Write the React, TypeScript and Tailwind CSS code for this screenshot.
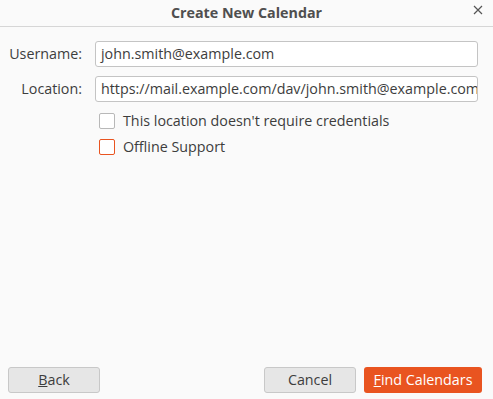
import React from "react";

export default function App() {
  const font = { fontFamily: '"Open Sans", "Noto Sans", sans-serif' };
  return (
    <div className="w-[493px] h-[399px] bg-[#fafafa] flex flex-col text-[#3d3d3d] text-[14.3px]" style={font}>
      <div className="h-[27px] border-b border-[#d6d6d6] flex items-center justify-center relative shrink-0">
        <span className="font-bold text-[#4f4f4f] text-[14.3px]">Create New Calendar</span>
        <svg className="absolute right-[10px] top-[5px]" width="10" height="10" viewBox="0 0 10 10">
          <path d="M1 1 L9 9 M9 1 L1 9" stroke="#555" strokeWidth="1.2" fill="none" />
        </svg>
      </div>
      <div className="flex-1 flex flex-col pt-[14px]">
        <div className="flex items-center h-[26px]">
          <div className="w-[82px] text-right pr-0">Username:</div>
          <div className="ml-[13px] w-[383px] h-[26px] border border-[#c4c4c4] rounded-[3px] bg-white flex items-center px-[5px] overflow-hidden whitespace-nowrap">john.smith@example.com</div>
        </div>
        <div className="flex items-center h-[26px] mt-[9px]">
          <div className="w-[82px] text-right">Location:</div>
          <div className="ml-[13px] w-[383px] h-[26px] border border-[#c4c4c4] rounded-[3px] bg-white flex items-center pl-[5px] overflow-hidden whitespace-nowrap">https://mail.example.com/dav/john.smith@example.com</div>
        </div>
        <div className="flex items-center mt-[8px] ml-[99px]">
          <div className="w-[16px] h-[16px] border border-[#b8b8b8] rounded-[2px] bg-white shrink-0" />
          <span className="ml-[8px]">This location doesn't require credentials</span>
        </div>
        <div className="flex items-center mt-[5px] ml-[99px]">
          <div className="w-[16px] h-[16px] border border-[#e95420] rounded-[2px] bg-white shrink-0" />
          <span className="ml-[8px]">Offline Support</span>
        </div>
      </div>
      <div className="flex items-center h-[26px] mb-[6px] px-[8px]">
        <button className="w-[92px] h-[26px] border border-[#c8c8c8] rounded-[3px] bg-[#e6e6e6] text-[#3d3d3d]"><span className="underline">B</span>ack</button>
        <div className="flex-1" />
        <button className="w-[92px] h-[26px] border border-[#c8c8c8] rounded-[3px] bg-[#e6e6e6] text-[#3d3d3d]">Cancel</button>
        <button className="ml-[8px] w-[118px] h-[26px] rounded-[3px] bg-[#e95420] text-white mr-[3px]"><span className="underline">F</span>ind Calendars</button>
      </div>
    </div>
  );
}
